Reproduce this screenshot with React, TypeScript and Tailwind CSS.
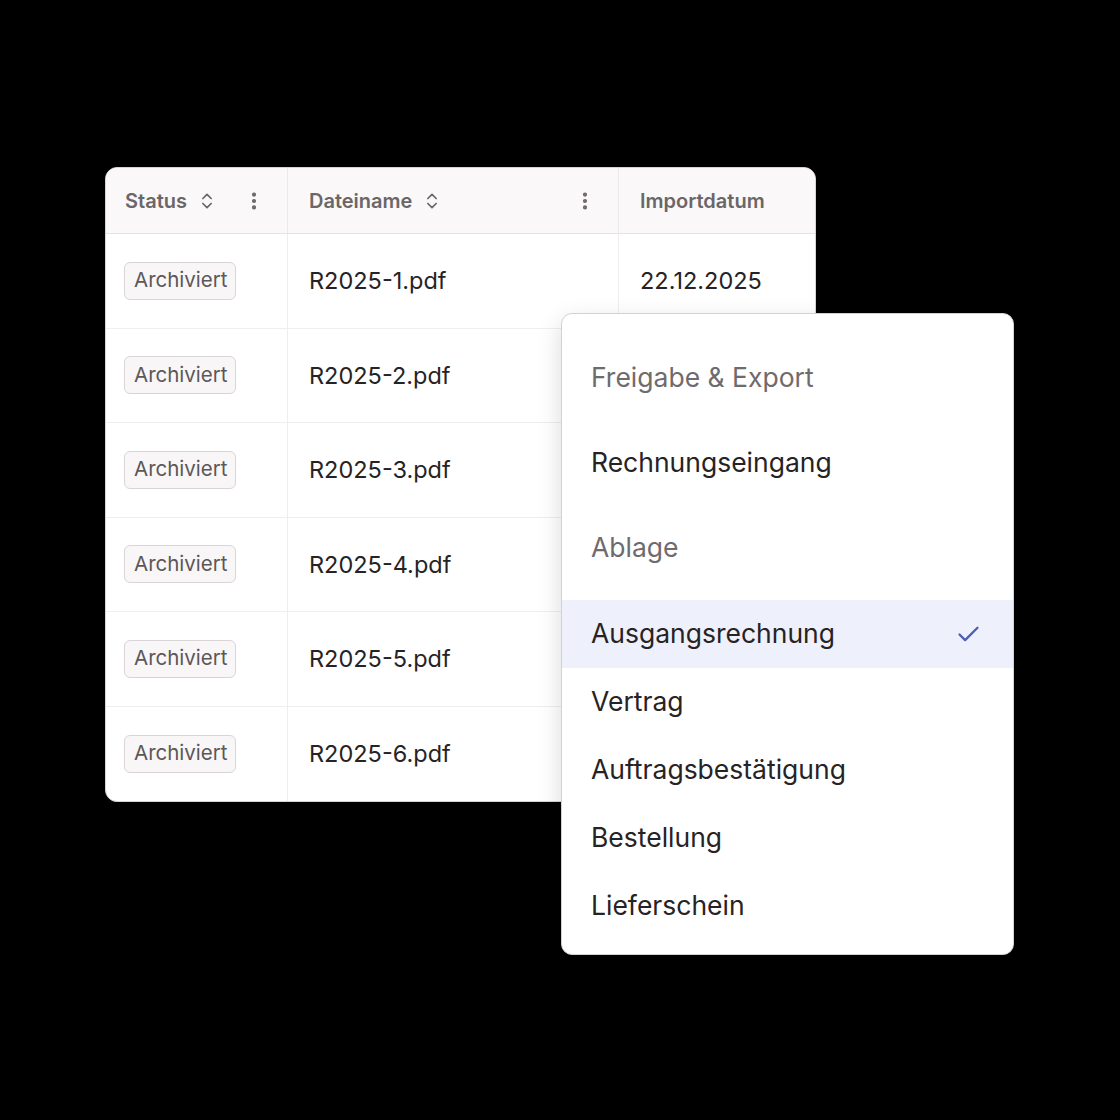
import { FC } from "react";
import { ChevronsUpDown, EllipsisVertical, Check } from "lucide-react";

const files = [1, 2, 3, 4, 5, 6];

const menuTop = [
  { label: "Freigabe & Export", muted: true },
  { label: "Rechnungseingang", muted: false },
  { label: "Ablage", muted: true },
];

const menuBottom = ["Ausgangsrechnung", "Vertrag", "Auftragsbestätigung", "Bestellung", "Lieferschein"];

const HeaderCell: FC<{ label: string; sort?: boolean; menu?: boolean; className?: string }> = ({
  label,
  sort,
  menu,
  className,
}) => (
  <div className={`flex items-center h-full pl-[19px] pr-[22px] ${className ?? ""}`}>
    <span className="text-[20px] font-semibold text-[#6b6668]">{label}</span>
    {sort && <ChevronsUpDown className="ml-[10px] text-[#6b6668]" size={20} strokeWidth={2} />}
    {menu && <EllipsisVertical className="ml-auto text-[#6b6668]" size={22} strokeWidth={2.6} />}
  </div>
);

const App: FC = () => {
  return (
    <div className="w-[1120px] h-[1120px] bg-black font-['Inter',sans-serif] text-[#272325]">
      <div className="relative pt-[167px] pl-[105px]">
        <div className="w-[711px] bg-white border border-[#d6d3d4] rounded-[12px] overflow-hidden">
          <div className="grid grid-cols-[182px_331px_1fr] h-[66px] bg-[#faf8f9] border-b border-[#e6e3e4]">
            <HeaderCell label="Status" sort menu className="border-r border-[#ebe9ea]" />
            <HeaderCell label="Dateiname" sort menu className="pl-[21px] border-r border-[#ebe9ea]" />
            <HeaderCell label="Importdatum" className="pl-[21px]" />
          </div>
          {files.map((n, i) => (
            <div
              key={n}
              className={`grid grid-cols-[182px_331px_1fr] h-[94.5px] ${i < files.length - 1 ? "border-b border-[#efedee]" : ""}`}
            >
              <div className="flex items-center pl-[18px] border-r border-[#efedee]">
                <span className="h-[38px] pl-[9px] pr-[7px] flex items-center rounded-[6px] border border-[#d9d5d7] bg-[#f8f6f7] text-[20.5px] text-[#5c5759]">
                  Archiviert
                </span>
              </div>
              <div className="flex items-center pl-[21px] border-r border-[#efedee] text-[23.5px]">
                R2025-{n}.pdf
              </div>
              <div className="flex items-center pl-[21px] text-[23.5px]">22.12.2025</div>
            </div>
          ))}
        </div>

        <div className="absolute left-[561px] top-[313px] w-[453px] bg-white border border-[#d4d1d2] rounded-[11px] pt-[21px] pb-[14px] shadow-[0_8px_24px_rgba(0,0,0,0.15)]">
          {menuTop.map((item) => (
            <div
              key={item.label}
              className={`h-[85px] flex items-center px-[29px] text-[26.5px] ${item.muted ? "text-[#6f6b6d]" : "text-[#272325]"}`}
            >
              {item.label}
            </div>
          ))}
          <div className="h-[10px]" />
          {menuBottom.map((label, i) => (
            <div
              key={label}
              className={`h-[68px] flex items-center px-[29px] text-[26.5px] ${i === 0 ? "bg-[#eef0fb]" : ""}`}
            >
              <span>{label}</span>
              {i === 0 && <Check className="ml-auto mr-[2px] text-[#4b5db4]" size={27} strokeWidth={2} />}
            </div>
          ))}
        </div>
      </div>
    </div>
  );
};

export default App;
